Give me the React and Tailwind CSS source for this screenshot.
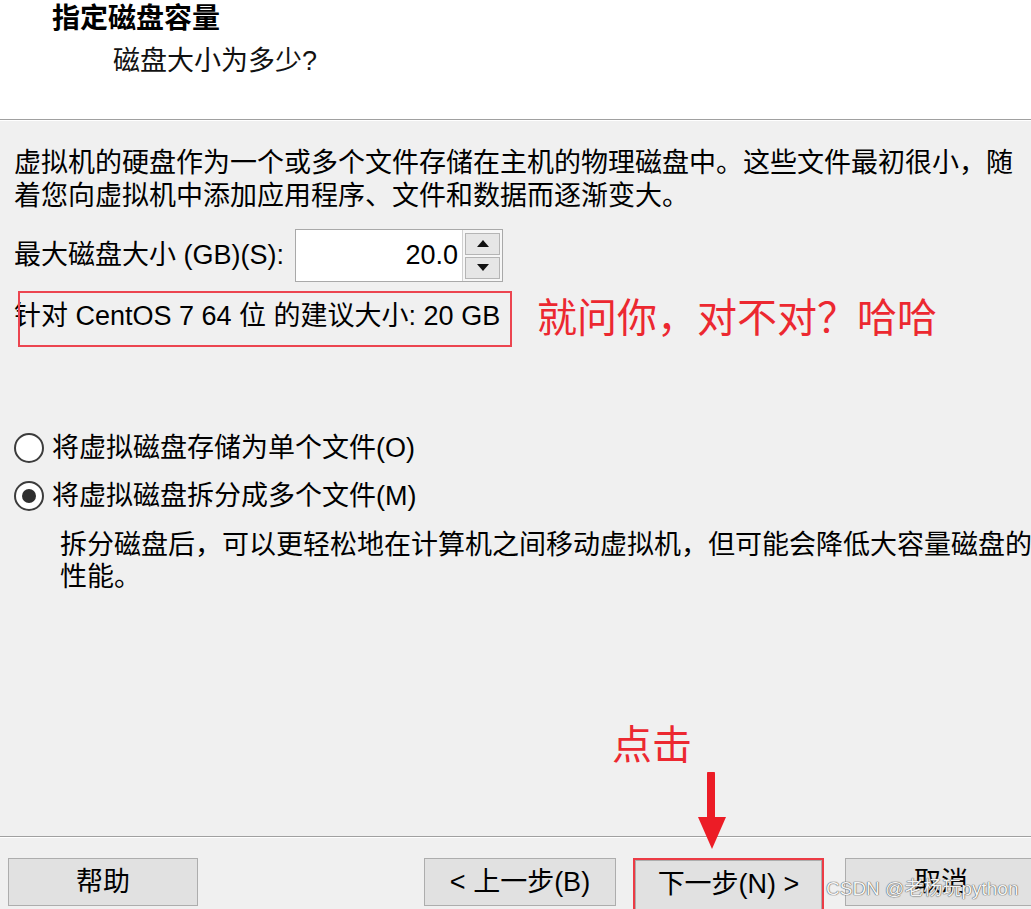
import React from "react";

const FONT = "font-['Liberation_Sans','Noto_Sans_CJK_SC',sans-serif]";

function Radio({ checked }) {
  return (
    <span className="w-[30px] h-[30px] rounded-full border-[2px] border-[#3c3c3c] bg-white flex items-center justify-center shrink-0">
      {checked && <span className="w-[14px] h-[14px] rounded-full bg-[#2e2e2e]" />}
    </span>
  );
}

function Btn({ children, className = "" }) {
  return (
    <div className={`h-[48px] bg-[#e1e1e1] border border-[#adadad] flex items-center justify-center text-[27px] leading-none text-black shrink-0 ${className}`}>
      {children}
    </div>
  );
}

export default function App() {
  return (
    <div className={`relative w-[1031px] h-[909px] overflow-hidden bg-[#f0f0f0] flex flex-col ${FONT}`}>
      {/* Header */}
      <div className="h-[120px] bg-white border-b border-[#a0a0a0] shrink-0">
        <div className="pl-[52px] pt-[2px] text-[28px] leading-[33px] font-bold text-black">指定磁盘容量</div>
        <div className="pl-[113px] mt-[10px] text-[27px] leading-[33px] text-[#111]">磁盘大小为多少?</div>
      </div>

      {/* Main */}
      <div className="flex-1 border-t border-white text-[27px] text-black">
        <div className="pl-[14px] pt-[26px] leading-[33px] whitespace-nowrap">
          <div>虚拟机的硬盘作为一个或多个文件存储在主机的物理磁盘中。这些文件最初很小，随</div>
          <div>着您向虚拟机中添加应用程序、文件和数据而逐渐变大。</div>
        </div>

        <div className="flex items-center mt-[16px] pl-[14px] h-[53px]">
          <span className="w-[281px] whitespace-nowrap leading-none">最大磁盘大小 (GB)(S):</span>
          <div className="flex h-[53px] w-[208px] border border-[#a9a9a9] bg-white">
            <div className="flex-1 flex items-center justify-end pr-[4px] border-r border-[#d0d0d0] leading-none">20.0</div>
            <div className="w-[39px] flex flex-col justify-center gap-[2px] px-[2px] bg-[#f7f7f7]">
              <div className="h-[22px] bg-[#e6e6e6] border border-[#b5b5b5] flex items-center justify-center">
                <svg width="12" height="7" viewBox="0 0 12 7"><path d="M6 0 L12 7 L0 7 Z" fill="#111" /></svg>
              </div>
              <div className="h-[22px] bg-[#e6e6e6] border border-[#b5b5b5] flex items-center justify-center">
                <svg width="12" height="7" viewBox="0 0 12 7"><path d="M0 0 L12 0 L6 7 Z" fill="#111" /></svg>
              </div>
            </div>
          </div>
        </div>

        <div className="pl-[14px] mt-[18px] leading-[33px] whitespace-nowrap">针对 CentOS 7 64 位 的建议大小: 20 GB</div>

        <div className="mt-[95px] pl-[14px] flex flex-col gap-[8px]">
          <div className="flex items-center h-[40px] gap-[8px] whitespace-nowrap">
            <Radio />
            <span className="leading-none">将虚拟磁盘存储为单个文件(O)</span>
          </div>
          <div className="flex items-center h-[40px] gap-[8px] whitespace-nowrap">
            <Radio checked />
            <span className="leading-none">将虚拟磁盘拆分成多个文件(M)</span>
          </div>
        </div>

        <div className="pl-[60px] mt-[13px] leading-[32px] whitespace-nowrap">
          <div>拆分磁盘后，可以更轻松地在计算机之间移动虚拟机，但可能会降低大容量磁盘的</div>
          <div>性能。</div>
        </div>
      </div>

      {/* Footer */}
      <div className="h-[73px] shrink-0 border-t border-[#a0a0a0]">
        <div className="border-t border-white h-full pt-[20px] flex items-start">
          <Btn className="ml-[8px] w-[190px]">帮助</Btn>
          <Btn className="ml-[226px] w-[192px]">&lt; 上一步(B)</Btn>
          <div className="ml-[17px] w-[191px] h-[60px] border-2 border-[#ec3b45] shrink-0">
            <div className="h-full bg-[#e1e1e1] border border-[#adadad] flex items-start pt-[8px] justify-center text-[27px] leading-[30px]">下一步(N) &gt;</div>
          </div>
          <Btn className="ml-[21px] w-[192px]">取消</Btn>
        </div>
      </div>

      {/* Annotations */}
      <div className="absolute left-[18px] top-[291px] w-[494px] h-[56px] border-2 border-[#ec4550]" />
      <div className="absolute left-[537px] top-[294px] text-[40px] leading-[48px] text-[#ec2830] whitespace-nowrap">就问你，对不对？哈哈</div>
      <div className="absolute left-[612px] top-[721px] text-[40px] leading-[48px] text-[#ec2830] whitespace-nowrap">点击</div>
      <svg className="absolute left-[696px] top-[772px]" width="32" height="78" viewBox="0 0 32 78">
        <path d="M15 2 L15 48" stroke="#ec1c26" strokeWidth="8" strokeLinecap="round" />
        <path d="M2 45 L30 45 L16 77 Z" fill="#ec1c26" />
      </svg>
      <div className="absolute left-[826px] top-[877px] text-[19px] leading-[24px] text-[#f4f4f4] whitespace-nowrap [text-shadow:0_0_1px_#444,0_0_1px_#444]">CSDN @老杨玩python</div>
    </div>
  );
}
